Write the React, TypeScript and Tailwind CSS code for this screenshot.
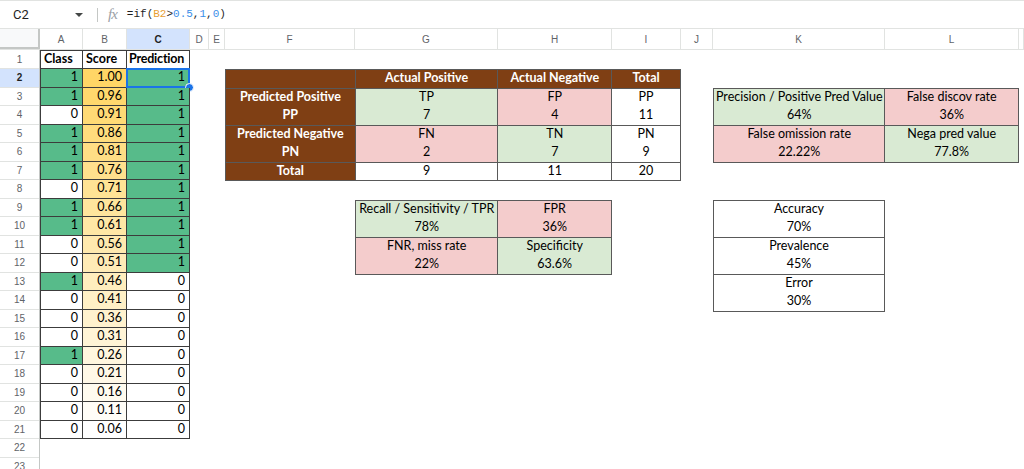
import React from 'react';

const classes = [1, 1, 0, 1, 1, 1, 0, 1, 1, 0, 0, 1, 0, 0, 0, 1, 0, 0, 0, 0];
const scores = [1.0, 0.96, 0.91, 0.86, 0.81, 0.76, 0.71, 0.66, 0.61, 0.56, 0.51, 0.46, 0.41, 0.36, 0.31, 0.26, 0.21, 0.16, 0.11, 0.06];

const columns: [string, string][] = [
  ['A', 'w-[43px]'],
  ['B', 'w-[44px]'],
  ['C', 'w-[63px]'],
  ['D', 'w-[19px]'],
  ['E', 'w-[16px]'],
  ['F', 'w-[130px]'],
  ['G', 'w-[143px]'],
  ['H', 'w-[114px]'],
  ['I', 'w-[69px]'],
  ['J', 'w-[32px]'],
  ['K', 'w-[172px]'],
  ['L', 'w-[134px]'],
  ['', 'flex-1'],
];

// yellow colour scale, white at the min value
const scoreBg = (s: number) => {
  const t = (s - 0.06) / 0.94;
  const g = Math.round(255 - t * (255 - 214));
  const b = Math.round(255 - t * (255 - 102));
  return `rgb(255, ${g}, ${b})`;
};

const FormulaBar: React.FC = () => (
  <div className="h-[29px] flex items-center border-t border-b border-[#e1e3e1] font-['Roboto',sans-serif]">
    <div className="w-[97px] flex items-center justify-between pl-[13px] pr-[14px] text-[13px] text-[#1f1f1f]">
      <span>C2</span>
      <svg width="8" height="4" viewBox="0 0 8 4">
        <path d="M0 0h8L4 4z" fill="#444746" />
      </svg>
    </div>
    <div className="w-px h-[14px] bg-[#c4c7c5]" />
    <span className="ml-[10px] italic text-[15px] text-[#9aa0a6] font-['Liberation_Serif',serif] tracking-[-1px]">fx</span>
    <span className="ml-[10px] text-[11px] font-['Liberation_Mono',monospace] text-[#1f1f1f]">
      =if(<span className="text-[#e8a033]">B2</span>&gt;<span className="text-[#3b8ee8]">0.5</span>,<span className="text-[#3b8ee8]">1</span>,<span className="text-[#3b8ee8]">0</span>)
    </span>
  </div>
);

const ColumnHeaders: React.FC = () => (
  <div className="h-[21px] flex border-b border-[#e1e3e1] font-['Liberation_Sans',sans-serif] text-[10px] text-[#5f6368]">
    <div className="w-[40px] h-full bg-[#f8f9fa] border-r-[2px] border-b-[2px] border-[#c4c7c5]" />
    {columns.map(([l, w]) => (
      <div
        key={l + w}
        className={
          l === 'C'
            ? `${w} h-full flex items-center justify-center border-r border-[#e1e3e1] bg-[#d3e3fd] font-bold text-[#1f1f1f]`
            : `${w} h-full flex items-center justify-center border-r border-[#e1e3e1]`
        }
      >
        {l}
      </div>
    ))}
  </div>
);

const RowHeaders: React.FC = () => (
  <div className="w-[40px] flex flex-col border-r border-[#c4c7c5] font-['Liberation_Sans',sans-serif] text-[10px] text-[#5f6368]">
    {Array.from({ length: 23 }, (_, i) => i + 1).map((n) => (
      <div
        key={n}
        className={
          n === 1
            ? 'h-[19px] shrink-0 flex items-center justify-center border-b border-[#e1e3e1]'
            : n === 2
            ? 'h-[18.5px] shrink-0 flex items-center justify-center border-b border-[#e1e3e1] bg-[#d3e3fd] font-bold text-[#1f1f1f]'
            : 'h-[18.5px] shrink-0 flex items-center justify-center border-b border-[#e1e3e1]'
        }
      >
        {n}
      </div>
    ))}
  </div>
);

const LeftTable: React.FC = () => (
  <div className="flex flex-col w-[150px] text-[12.5px]">
    <div className="h-[19px] flex font-bold">
      <div className="w-[43px] flex items-center pl-[3px] border border-[#3c3c3c]">Class</div>
      <div className="w-[44px] flex items-center pl-[3px] border-t border-r border-b border-[#3c3c3c]">Score</div>
      <div className="w-[63px] flex items-center pl-[2px] border-t border-r border-b border-[#3c3c3c] tracking-[-0.2px]">Prediction</div>
    </div>
    {scores.map((s, i) => {
      const pred = s > 0.5 ? 1 : 0;
      return (
        <div key={i} className="h-[18.5px] flex">
          <div
            className={
              classes[i]
                ? 'w-[43px] flex items-center justify-end pr-1 border-l border-r border-b border-[#3c3c3c] bg-[#57bb8a]'
                : 'w-[43px] flex items-center justify-end pr-1 border-l border-r border-b border-[#3c3c3c]'
            }
          >
            {classes[i]}
          </div>
          <div
            className="w-[44px] flex items-center justify-end pr-1 border-r border-b border-[#3c3c3c]"
            style={{ backgroundColor: scoreBg(s) }}
          >
            {s.toFixed(2)}
          </div>
          <div
            className={
              pred
                ? 'relative w-[63px] flex items-center justify-end pr-1 border-r border-b border-[#3c3c3c] bg-[#57bb8a]'
                : 'relative w-[63px] flex items-center justify-end pr-1 border-r border-b border-[#3c3c3c]'
            }
          >
            {pred}
            {i === 0 && (
              <>
                <div className="absolute -inset-px border-2 border-[#1a73e8]" />
                <div className="absolute -right-[5px] -bottom-[5px] w-[9px] h-[9px] rounded-full bg-[#1a73e8] border border-white" />
              </>
            )}
          </div>
        </div>
      );
    })}
  </div>
);

const Two: React.FC<{ a: string; b: string; bold?: boolean }> = ({ a, b, bold }) => (
  <div className={bold ? 'flex flex-col font-bold' : 'flex flex-col'}>
    <div className="h-[18px] flex items-center justify-center whitespace-nowrap">{a}</div>
    <div className="h-[18px] flex items-center justify-center whitespace-nowrap">{b}</div>
  </div>
);

const ConfusionMatrix: React.FC = () => (
  <div className="flex flex-col w-[456px] text-[12.5px] border-t border-l border-[#595959]">
    <div className="h-[18.5px] flex bg-[#7f3f14] text-white font-bold">
      <div className="w-[130px] border-r border-b border-[#595959]" />
      <div className="w-[143px] flex items-center justify-center border-r border-b border-[#595959]">Actual Positive</div>
      <div className="w-[114px] flex items-center justify-center border-r border-b border-[#595959]">Actual Negative</div>
      <div className="w-[69px] flex items-center justify-center border-r border-b border-[#595959]">Total</div>
    </div>
    <div className="h-[37px] flex">
      <div className="w-[130px] flex items-center justify-center bg-[#7f3f14] text-white border-r border-b border-[#595959]">
        <Two a="Predicted Positive" b="PP" bold />
      </div>
      <div className="w-[143px] flex items-center justify-center bg-[#d9ead3] border-r border-b border-[#595959]">
        <Two a="TP" b="7" />
      </div>
      <div className="w-[114px] flex items-center justify-center bg-[#f4cccc] border-r border-b border-[#595959]">
        <Two a="FP" b="4" />
      </div>
      <div className="w-[69px] flex items-center justify-center border-r border-b border-[#595959]">
        <Two a="PP" b="11" />
      </div>
    </div>
    <div className="h-[37px] flex">
      <div className="w-[130px] flex items-center justify-center bg-[#7f3f14] text-white border-r border-b border-[#595959]">
        <Two a="Predicted Negative" b="PN" bold />
      </div>
      <div className="w-[143px] flex items-center justify-center bg-[#f4cccc] border-r border-b border-[#595959]">
        <Two a="FN" b="2" />
      </div>
      <div className="w-[114px] flex items-center justify-center bg-[#d9ead3] border-r border-b border-[#595959]">
        <Two a="TN" b="7" />
      </div>
      <div className="w-[69px] flex items-center justify-center border-r border-b border-[#595959]">
        <Two a="PN" b="9" />
      </div>
    </div>
    <div className="h-[18.5px] flex">
      <div className="w-[130px] flex items-center justify-center bg-[#7f3f14] text-white font-bold border-r border-b border-[#595959]">Total</div>
      <div className="w-[143px] flex items-center justify-center border-r border-b border-[#595959]">9</div>
      <div className="w-[114px] flex items-center justify-center border-r border-b border-[#595959]">11</div>
      <div className="w-[69px] flex items-center justify-center border-r border-b border-[#595959]">20</div>
    </div>
  </div>
);

const RatesTable: React.FC = () => (
  <div className="ml-[130px] flex flex-col w-[257px] text-[12.5px] border-t border-l border-[#595959]">
    <div className="h-[37px] flex">
      <div className="w-[143px] flex items-center justify-center bg-[#d9ead3] border-r border-b border-[#595959]">
        <Two a="Recall / Sensitivity / TPR" b="78%" />
      </div>
      <div className="w-[114px] flex items-center justify-center bg-[#f4cccc] border-r border-b border-[#595959]">
        <Two a="FPR" b="36%" />
      </div>
    </div>
    <div className="h-[37px] flex">
      <div className="w-[143px] flex items-center justify-center bg-[#f4cccc] border-r border-b border-[#595959]">
        <Two a="FNR, miss rate" b="22%" />
      </div>
      <div className="w-[114px] flex items-center justify-center bg-[#d9ead3] border-r border-b border-[#595959]">
        <Two a="Specificity" b="63.6%" />
      </div>
    </div>
  </div>
);

const PredTable: React.FC = () => (
  <div className="flex flex-col w-[306px] text-[12.5px] border-t border-l border-[#595959]">
    <div className="h-[37px] flex">
      <div className="w-[172px] flex items-center justify-center bg-[#d9ead3] border-r border-b border-[#595959]">
        <Two a="Precision / Positive Pred Value" b="64%" />
      </div>
      <div className="w-[134px] flex items-center justify-center bg-[#f4cccc] border-r border-b border-[#595959]">
        <Two a="False discov rate" b="36%" />
      </div>
    </div>
    <div className="h-[37px] flex">
      <div className="w-[172px] flex items-center justify-center bg-[#f4cccc] border-r border-b border-[#595959]">
        <Two a="False omission rate" b="22.22%" />
      </div>
      <div className="w-[134px] flex items-center justify-center bg-[#d9ead3] border-r border-b border-[#595959]">
        <Two a="Nega pred value" b="77.8%" />
      </div>
    </div>
  </div>
);

const SummaryTable: React.FC = () => (
  <div className="flex flex-col w-[172px] text-[12.5px] border-t border-l border-[#595959]">
    {[
      ['Accuracy', '70%'],
      ['Prevalence', '45%'],
      ['Error', '30%'],
    ].map(([a, b]) => (
      <div key={a} className="h-[37px] flex items-center justify-center border-r border-b border-[#595959]">
        <Two a={a} b={b} />
      </div>
    ))}
  </div>
);

const App: React.FC = () => {
  return (
    <div className="w-[1024px] h-[469px] overflow-hidden bg-white text-black font-['Lato',sans-serif]">
      <FormulaBar />
      <ColumnHeaders />
      <div className="flex">
        <RowHeaders />
        <div className="flex items-start">
          <LeftTable />
          <div className="w-[35px]" />
          <div className="flex flex-col pt-[19px]">
            <ConfusionMatrix />
            <div className="h-[18.5px]" />
            <RatesTable />
          </div>
          <div className="w-[32px]" />
          <div className="flex flex-col pt-[37.5px]">
            <PredTable />
            <div className="h-[37px]" />
            <SummaryTable />
          </div>
        </div>
      </div>
    </div>
  );
};

export default App;
